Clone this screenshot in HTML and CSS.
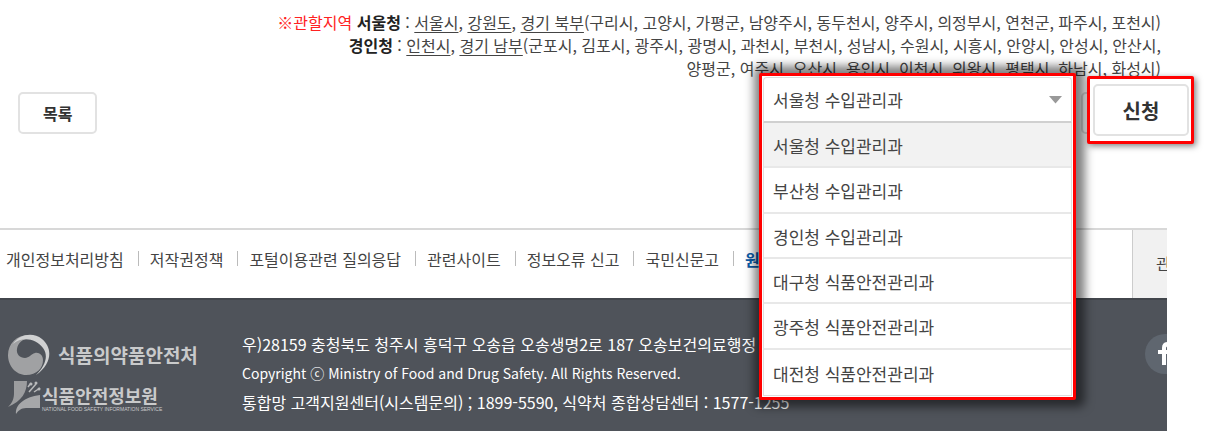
FILE: index.html
```html
<!DOCTYPE html>
<html lang="ko">
<head>
<meta charset="utf-8">
<title>수입관리과 신청</title>
<meta name="viewport" content="width=device-width, initial-scale=1">
<link rel="stylesheet" href="styles.css">
</head>
<body>
<div class="page">
  <main class="content">
    <div class="regions">
      <p><span class="note">※관할지역</span> <strong>서울청</strong> : <u>서울시</u>, <u>강원도</u>, <u>경기 북부</u>(구리시, 고양시, 가평군, 남양주시, 동두천시, 양주시, 의정부시, 연천군, 파주시, 포천시)</p>
      <p><strong>경인청</strong> : <u>인천시</u>, <u>경기 남부</u>(군포시, 김포시, 광주시, 광명시, 과천시, 부천시, 성남시, 수원시, 시흥시, 안양시, 안성시, 안산시,</p>
      <p>양평군, 여주시, 오산시, 용인시, 이천시, 의왕시, 평택시, 하남시, 화성시)</p>
    </div>
    <div class="actions">
      <button class="btn" type="button">목록</button>
      <div class="apply-slot">
        <div class="office">
          <div class="office-field">
            <select class="office-select" aria-label="관할 부서">
              <option>서울청 수입관리과</option>
              <option>부산청 수입관리과</option>
              <option>경인청 수입관리과</option>
              <option>대구청 식품안전관리과</option>
              <option>광주청 식품안전관리과</option>
              <option>대전청 식품안전관리과</option>
            </select>
            <svg class="office-arrow" viewBox="0 0 13 8" aria-hidden="true"><path d="M0 0h13L6.500 7.500z" fill="#999"/></svg>
          </div>
          <ul class="office-list" role="listbox" aria-label="관할 부서 목록">
            <li class="office-option is-active" role="option" aria-selected="true">서울청 수입관리과</li>
            <li class="office-option" role="option">부산청 수입관리과</li>
            <li class="office-option" role="option">경인청 수입관리과</li>
            <li class="office-option" role="option">대구청 식품안전관리과</li>
            <li class="office-option" role="option">광주청 식품안전관리과</li>
            <li class="office-option" role="option">대전청 식품안전관리과</li>
          </ul>
        </div>
        <div class="apply"><button class="btn btn-large" type="button">신청</button></div>
      </div>
    </div>
  </main>
  <footer class="footer">
    <div class="links">
      <nav class="nav">
        <a href="#">개인정보처리방침</a>
        <a href="#">저작권정책</a>
        <a href="#">포털이용관련 질의응답</a>
        <a href="#">관련사이트</a>
        <a href="#">정보오류 신고</a>
        <a href="#">국민신문고</a>
        <a href="#" class="nav-strong">원</a>
      </nav>
      <button class="sites" type="button">관</button>
    </div>
    <div class="info">
      <div class="logos">
        <div class="logo">
          <svg class="emblem" viewBox="0 0 42 42" aria-hidden="true">
            <path d="M20 1A20 20 0 0 0 0 21c0 11 8 20 18 20 11 0 17-7 17-15 0-5-4-8-8-7-4 1-6 5-10 5-5 0-9-4-8-9C10 8 16 4 23 5z" fill="#a0a1a3"/>
            <path d="M5 10C12 0 25-2 34 5c11 9 10 25-6 36 9-9 13-19 7-27C28 5 15 2 5 10z" fill="#d0d1d2"/>
          </svg>
          <span class="logo-name">식품의약품안전처</span>
        </div>
        <div class="logo logo-second">
          <svg class="mark" viewBox="0 0 34 33" aria-hidden="true">
            <path d="M6 0h13c0 11-5 20-19 26 5-5 6-9 6-14z" fill="#9c9d9f"/>
            <path d="M32 14v13H18C13 27 10 30 8 33c-1-9 8-17 24-19z" fill="#a6a7a9"/>
            <path d="M21 11l7-8M20 6l3-4M26 11l6-4" fill="none" stroke="#b9babb" stroke-width="1.500"/>
            <circle cx="23" cy="3" r="1.500" fill="#b9babb"/><circle cx="28" cy="2" r="1.500" fill="#b9babb"/><circle cx="31" cy="8" r="1.500" fill="#b9babb"/>
          </svg>
          <span class="logo-stack">
            <span class="logo-name">식품안전정보원</span>
            <span class="logo-sub">NATIONAL FOOD SAFETY INFORMATION SERVICE</span>
          </span>
        </div>
      </div>
      <address class="address">
        <p>우)28159 충청북도 청주시 흥덕구 오송읍 오송생명2로 187 오송보건의료행정</p>
        <p class="copyright">Copyright ⓒ Ministry of Food and Drug Safety. All Rights Reserved.</p>
        <p>통합망 고객지원센터(시스템문의) ; 1899-5590, 식약처 종합상담센터 : 1577-1255</p>
      </address>
      <a class="social" href="#" aria-label="페이스북">
        <svg viewBox="0 0 40 40" aria-hidden="true"><circle cx="20" cy="20" r="20" fill="#5f666f"/><path d="M17 31V20h-4v-4h4v-2c0-4 2-6 6-6h3v4h-2c-2 0-3 1-3 2v2h5l-1 4h-4v11z" fill="#fff"/></svg>
      </a>
    </div>
  </footer>
</div>
</body>
</html>
```
FILE: styles.css
```css
* { box-sizing: border-box; }

body {
  margin: 0;
  background: #fff;
  color: #444;
  font-family: "Noto Sans CJK KR", sans-serif;
  font-size: 16px;
}

p, ul { margin: 0; padding: 0; }
a { color: inherit; text-decoration: none; }
button, select { font: inherit; color: inherit; }

.page {
  display: flex;
  flex-direction: column;
  min-height: 100vh;
  padding-right: 41px;
}

.content { padding: 11px 6px 94px 18px; }

.regions {
  line-height: 23px;
  text-align: right;
  white-space: nowrap;
}
.regions strong { color: #222; }
.regions u { text-underline-offset: 3px; }
.note { color: #f22; }

.actions {
  display: flex;
  justify-content: space-between;
  align-items: flex-start;
  padding-top: 12px;
}

.btn {
  height: 42px;
  padding: 0 23px;
  border: 2px solid #e2e2e2;
  border-radius: 5px;
  background: #fff;
  color: #333;
  font-weight: 700;
}

.apply-slot {
  position: relative;
  width: 80px;
  height: 42px;
  border: 2px solid #ddd;
  border-radius: 5px;
}

.apply {
  position: absolute;
  top: -18px;
  left: 4px;
  padding: 5px 2px 5px 3px;
  border: 3px solid #f00;
  border-radius: 2px;
  background: #fff;
  box-shadow: 2px 2px 6px rgba(0, 0, 0, .5);
}

.btn-large {
  display: block;
  width: 96px;
  height: 52px;
  font-size: 20px;
}

.office {
  position: absolute;
  top: -21px;
  right: 83px;
  width: 317px;
  padding: 1px;
  border: 3px solid #f00;
  border-radius: 2px;
  background: #fff;
  box-shadow: 2px 0 10px 7px rgba(0, 0, 0, .5);
  font-size: 17px;
}

.office-field {
  display: grid;
  align-items: center;
}
.office-select {
  grid-area: 1 / 1;
  width: 100%;
  height: 46px;
  padding: 0 9px;
  border: 1px solid #ddd;
  border-bottom: 2px solid #d0d0d0;
  border-radius: 4px 4px 0 0;
  background: #fff;
  appearance: none;
}
.office-arrow {
  grid-area: 1 / 1;
  justify-self: end;
  width: 13px;
  height: 8px;
  margin-right: 10px;
  pointer-events: none;
}

.office-list {
  display: grid;
  grid-auto-rows: 1fr;
  height: 273px;
  border: 1px solid #ddd;
  border-top: 0;
  list-style: none;
}
.office-option {
  display: flex;
  align-items: center;
  padding: 2px 9px 0;
  border-bottom: 2px solid #e8e8e8;
}
.office-option:last-child { border-bottom: 0; }
.is-active { background: #f2f2f2; }

.footer {
  display: flex;
  flex: 1;
  flex-direction: column;
}

.links {
  display: flex;
  justify-content: space-between;
  height: 70px;
  border-top: 2px solid #d8d8d8;
}
.nav {
  display: flex;
  align-items: center;
  padding: 0 0 11px 6px;
  white-space: nowrap;
}
.nav a { display: flex; align-items: center; }
.nav a + a::before {
  width: 1px;
  height: 15px;
  margin: 0 11px 0 14px;
  background: #bbb;
  content: "";
}
.nav .nav-strong { color: #0b5ca8; font-weight: 700; }

.sites {
  width: 35px;
  padding: 0 0 3px 23px;
  overflow: hidden;
  border: 0;
  border-left: 1px solid #ccc;
  background: #f1f1f1;
  text-align: left;
  white-space: nowrap;
}

.info {
  display: flex;
  flex: 1;
  align-items: flex-start;
  overflow: hidden;
  padding: 30px 0 12px 8px;
  border-top: 2px solid #42464c;
  background: #4f535a;
  color: #fff;
}

.logos { width: 234px; padding-top: 4px; }
.logo {
  display: flex;
  align-items: center;
  gap: 8px;
  color: #c9cacb;
  font-weight: 700;
  white-space: nowrap;
}
.logo-name { font-size: 19px; line-height: 24px; }
.logo-second { gap: 0; margin-top: 5px; }
.logo-second .logo-name { font-size: 18px; line-height: 22px; }
.logo-stack { display: flex; flex-direction: column; }
.logo-sub { font-family: "Liberation Sans", sans-serif; font-size: 5px; font-weight: 400; line-height: 6px; }
.emblem { width: 42px; height: 42px; }
.mark { width: 34px; height: 33px; }

.address {
  font-style: normal;
  line-height: 29px;
  white-space: nowrap;
}
.copyright { font-size: 14px; }

.social {
  width: 22px;
  margin: 4px 0 0 auto;
  overflow: hidden;
}
.social svg { display: block; width: 40px; height: 40px; }
```
